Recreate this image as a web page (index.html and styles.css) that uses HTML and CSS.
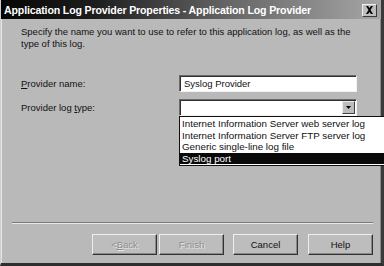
FILE: index.html
```html
<!DOCTYPE html>
<html>
<head>
<meta charset="utf-8">
<link rel="stylesheet" href="styles.css">
</head>
<body>
<div class="window">
  <div class="titlebar">
    <span class="title">Application Log Provider Properties - Application Log Provider</span>
    <span class="close"><svg width="9" height="8" viewBox="0 0 9 8"><path d="M1 0h2l1.5 2 1.5-2h2L5.5 4 8 8H6L4.5 6 3 8H1l2.5-4z" fill="#000"/></svg></span>
  </div>
  <div class="content">
    <p class="intro">Specify the name you want to use to refer to this application log, as well as the type of this log.</p>
    <div class="row">
      <span class="label"><u>P</u>rovider name:</span>
      <div class="field">Syslog Provider</div>
    </div>
    <div class="row">
      <span class="label">Provider log <u>t</u>ype:</span>
      <div class="combo">
        <div class="field select"><span class="arrowbtn"><svg width="5" height="3" viewBox="0 0 5 3"><path d="M0 0h5L2.5 3z" fill="#000"/></svg></span></div>
        <ul class="list">
          <li>Internet Information Server web server log</li>
          <li>Internet Information Server FTP server log</li>
          <li>Generic single-line log file</li>
          <li class="sel">Syslog port</li>
        </ul>
      </div>
    </div>
  </div>
  <div class="footer">
    <div class="sep"></div>
    <div class="buttons">
      <span class="btn disabled">&lt; <u>B</u>ack</span>
      <span class="btn disabled">Finish</span>
      <span class="btn gap">Cancel</span>
      <span class="btn gap2">Help</span>
    </div>
  </div>
</div>
</body>
</html>
```
FILE: styles.css
```css
* { box-sizing: border-box; }
html, body { margin: 0; padding: 0; }
body {
  width: 384px;
  height: 266px;
  overflow: hidden;
  background: #b9b9b9;
  font-family: "Liberation Sans", Arial, sans-serif;
}
.window {
  width: 384px;
  height: 266px;
  display: flex;
  flex-direction: column;
  background: #b9b9b9;
  border-left: 1px solid #cfcfcf;
  border-right: 3px solid #3a3a3a;
  border-bottom: 3px solid #2e2e2e;
  box-shadow: inset 1px 0 0 #e6e6e6, inset -1px 0 0 #8a8a8a;
}
.titlebar {
  height: 19px;
  display: flex;
  align-items: center;
  justify-content: space-between;
  padding: 0 4px 0 3px;
  background: linear-gradient(to right, #050505 0%, #1e1e1e 25%, #666 60%, #a6a6a6 100%);
  flex-shrink: 0;
}
.title {
  color: #fff;
  font-weight: bold;
  font-size: 10.6px;
  letter-spacing: -0.15px;
  white-space: nowrap;
}
.close {
  width: 15px;
  height: 13px;
  display: flex;
  align-items: center;
  justify-content: center;
  background: #bdbdbd;
  border: 1px solid;
  border-color: #efefef #3a3a3a #3a3a3a #efefef;
  margin-top: 1px;
}
.content {
  flex: 1;
  padding: 7px 0 0 20px;
  font-size: 9.5px;
  color: #111;
}
.intro {
  margin: 0 0 25px 0;
  width: 340px;
  line-height: 12px;
}
.row {
  display: flex;
  align-items: center;
  height: 17px;
  margin-bottom: 7px;
}
.label {
  width: 158px;
}
.field {
  width: 178px;
  height: 17px;
  background: #fff;
  border: 1px solid;
  border-color: #6a6a6a #f2f2f2 #f2f2f2 #6a6a6a;
  box-shadow: inset 1px 1px 0 #303030;
  padding: 2px 0 0 4px;
  font-size: 9.5px;
  line-height: 12px;
}
.combo { position: relative; }
.select { position: relative; }
.arrowbtn {
  position: absolute;
  right: 1px;
  top: 1px;
  width: 13px;
  height: 13px;
  background: #bdbdbd;
  border: 1px solid;
  border-color: #ececec #404040 #404040 #ececec;
  display: flex;
  align-items: center;
  justify-content: center;
}
.list {
  position: absolute;
  left: 0;
  top: 17px;
  width: 206px;
  margin: 0;
  padding: 1px 0 1px 0;
  list-style: none;
  background: #fff;
  border: 1px solid #111;
  border-right: none;
  z-index: 2;
}
.list li {
  height: 11.5px;
  line-height: 11.5px;
  padding-left: 2px;
  font-size: 9.8px;
  white-space: nowrap;
}
.list li.sel {
  background: #0a0a0a;
  color: #fff;
}
.footer {
  flex-shrink: 0;
  padding: 0 8px 8px 11px;
}
.sep {
  height: 2px;
  border-top: 1px solid #7a7a7a;
  border-bottom: 1px solid #e8e8e8;
  margin-bottom: 10px;
}
.buttons {
  display: flex;
  justify-content: flex-end;
  gap: 2px;
}
.btn {
  width: 65px;
  height: 21px;
  display: flex;
  align-items: center;
  justify-content: center;
  background: #bdbdbd;
  font-size: 9.5px;
  color: #111;
  border: 1px solid;
  border-color: #eeeeee #333 #333 #eeeeee;
  box-shadow: inset -1px -1px 0 #888;
}
.btn.gap { margin-left: 7px; }
.btn.gap2 { margin-left: 8px; }
.btn.disabled { color: #8e8e8e; text-shadow: 1px 1px 0 #e6e6e6; }
```
